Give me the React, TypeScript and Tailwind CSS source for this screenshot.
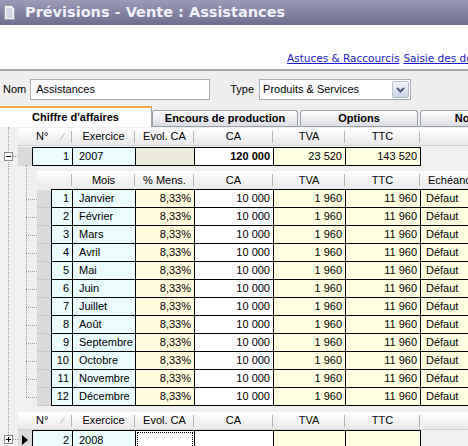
const months = [
  "Janvier",
  "Février",
  "Mars",
  "Avril",
  "Mai",
  "Juin",
  "Juillet",
  "Août",
  "Septembre",
  "Octobre",
  "Novembre",
  "Décembre",
];

function DocIcon() {
  return (
    <svg width="13" height="15" viewBox="0 0 13 15" className="shrink-0">
      <path d="M1.5 0.5h7l3 3v11h-10z" fill="#f4f4f8" stroke="#9aa0b0" />
      <path d="M3.5 4h5M3.5 6h6M3.5 8h6M3.5 10h6M3.5 12h6" stroke="#a8b4c8" />
    </svg>
  );
}

function HeadCell({
  width,
  label,
  sort = false,
}: {
  width: string;
  label?: string;
  sort?: boolean;
}) {
  return (
    <div
      className={`relative flex h-full shrink-0 items-center ${width} ${
        sort ? "justify-start pl-[4px]" : "justify-center"
      }`}
    >
      {label}
      {sort ? (
        <svg width="5" height="7" viewBox="0 0 5 7" className="ml-auto mr-[7px]">
          <path d="M0.5 6.5L4.5 0.5" stroke="#b8b8b8" />
        </svg>
      ) : null}
      <span className="absolute right-0 top-[3px] h-[12px] w-px bg-[#b4b4b4]" />
    </div>
  );
}

function MasterHeader() {
  return (
    <div className="flex h-[18px] items-stretch">
      <div className="w-[18px] shrink-0" />
      <div className="flex flex-1 border-b border-[#d4d4d4] bg-gradient-to-b from-white to-[#e9e9e9]">
        <div className="w-[14px] shrink-0" />
        <HeadCell width="w-[40px]" label="N°" sort />
        <HeadCell width="w-[63px]" label="Exercice" />
        <HeadCell width="w-[59px]" label="Evol. CA" />
        <HeadCell width="w-[79px]" label="CA" />
        <HeadCell width="w-[72px]" label="TVA" />
        <HeadCell width="w-[75px]" label="TTC" />
      </div>
    </div>
  );
}

function ExpandBox({ open }: { open: boolean }) {
  return (
    <div className="relative flex h-[9px] w-[9px] shrink-0 items-center justify-center border border-[#8a8a8a] bg-white">
      <span className="h-px w-[5px] bg-black" />
      {open ? null : <span className="absolute h-[5px] w-px bg-black" />}
    </div>
  );
}

function TreeCell({ open }: { open: boolean }) {
  return (
    <div className="flex w-[18px] shrink-0 items-center pl-[4px]">
      <ExpandBox open={open} />
      <span className="h-0 flex-1 border-t border-dotted border-[#9a9a9a]" />
    </div>
  );
}

function Cell({
  width,
  bg,
  align = "right",
  bold = false,
  children,
}: {
  width: string;
  bg: string;
  align?: "left" | "right";
  bold?: boolean;
  children?: React.ReactNode;
}) {
  return (
    <div
      className={`flex h-full shrink-0 items-center border-r border-black ${width} ${bg} ${
        align === "right" ? "justify-end pr-[3px]" : "justify-start pl-[6px]"
      } ${bold ? "font-bold" : ""}`}
    >
      {children}
    </div>
  );
}

function ChildHeader() {
  return (
    <div className="flex h-[18px] items-stretch">
      <div className="w-[37px] shrink-0" />
      <div className="flex flex-1 overflow-hidden bg-gradient-to-b from-white to-[#e9e9e9]">
        <div className="w-[14px] shrink-0" />
        <HeadCell width="w-[21px]" />
        <HeadCell width="w-[63px]" label="Mois" />
        <HeadCell width="w-[59px]" label="% Mens." />
        <HeadCell width="w-[79px]" label="CA" />
        <HeadCell width="w-[72px]" label="TVA" />
        <HeadCell width="w-[75px]" label="TTC" />
        <div className="flex h-full items-center whitespace-nowrap pl-[8px]">Echéance</div>
      </div>
    </div>
  );
}

function ChildRow({ index, month }: { index: number; month: string }) {
  return (
    <div className="flex h-[18px] items-stretch">
      <div className="w-[26px] shrink-0" />
      <div className="flex w-[11px] shrink-0 items-center">
        <span className="h-0 w-full border-t border-dotted border-[#9a9a9a]" />
      </div>
      <div className="w-[14px] shrink-0 border-b border-[#c8c8c8] bg-[#dadada]" />
      <div className="flex flex-1 border-b border-l border-black">
        <Cell width="w-[21px]" bg="bg-[#eafcfc]">
          {index}
        </Cell>
        <Cell width="w-[63px]" bg="bg-[#eafcfc]" align="left">
          {month}
        </Cell>
        <Cell width="w-[59px]" bg="bg-[#fffbdc]">
          8,33%
        </Cell>
        <Cell width="w-[79px]" bg="bg-white">
          10 000
        </Cell>
        <Cell width="w-[72px]" bg="bg-[#ffffe1]">
          1 960
        </Cell>
        <Cell width="w-[75px]" bg="bg-[#ffffe1]">
          11 960
        </Cell>
        <div className="flex flex-1 items-center bg-[#ffffe1] pl-[5px]">Défaut</div>
      </div>
    </div>
  );
}

export default function App() {
  return (
    <div className="flex h-[446px] w-[468px] flex-col overflow-hidden bg-white font-['Liberation_Sans',Arial,sans-serif] text-[11px] text-black">
      {/* title bar */}
      <div className="flex h-[25px] shrink-0 items-center gap-[9px] bg-gradient-to-b from-[#9c9ab8] to-[#6f6d90] pl-[3px]">
        <DocIcon />
        <span className="whitespace-nowrap font-['DejaVu_Sans',Verdana,sans-serif] text-[14.5px] font-bold text-[#f2f2fa]">
          Prévisions - Vente : Assistances
        </span>
      </div>

      {/* links */}
      <div className="flex h-[44px] shrink-0 items-end overflow-hidden whitespace-nowrap pb-[2px] pl-[287px] font-['DejaVu_Sans',Verdana,sans-serif] text-[10.5px] text-[#1c1ccc]">
        <a className="underline">Astuces &amp; Raccourcis</a>
        <a className="ml-[4px] underline">Saisie des données</a>
      </div>

      {/* toolbar */}
      <div className="flex h-[37px] shrink-0 items-center border-t-2 border-[#a4a4a4] bg-[#efefef] pt-[2px]">
        <span className="pl-[3px] pr-[4px]">Nom</span>
        <div className="flex h-[21px] w-[180px] items-center border border-[#a9aeb6] bg-white pl-[5px]">
          Assistances
        </div>
        <span className="ml-[20px] mr-[5px]">Type</span>
        <div className="flex h-[21px] w-[152px] items-center border border-[#a9aeb6] bg-white pl-[3px]">
          <span className="flex-1">Produits &amp; Services</span>
          <div className="mr-[1px] flex h-[17px] w-[17px] items-center justify-center rounded-[2px] border border-[#b6bfd2] bg-gradient-to-b from-[#f4f6fb] to-[#c9d2e6]">
            <svg width="9" height="6" viewBox="0 0 9 6">
              <path d="M1 1l3.5 3.5L8 1" fill="none" stroke="#4c5d80" strokeWidth="2" />
            </svg>
          </div>
        </div>
      </div>

      {/* tabs */}
      <div className="flex h-[21px] shrink-0 items-end overflow-hidden bg-[#efefef] font-bold">
        <div className="flex h-[21px] w-[152px] shrink-0 items-center justify-center border-t-2 border-r border-[#f5a93a] border-r-[#a0a7ad] bg-white pb-[1px]">
          Chiffre d'affaires
        </div>
        <div className="flex h-[17px] flex-1 items-stretch gap-[2px] border-b border-[#98a0a6]">
          <div className="flex w-[146px] shrink-0 items-center justify-center rounded-t-[3px] border-x border-t border-[#98a0a6] bg-gradient-to-b from-white to-[#dcdde4]">
            Encours de production
          </div>
          <div className="flex w-[118px] shrink-0 items-center justify-center rounded-t-[3px] border-x border-t border-[#98a0a6] bg-gradient-to-b from-white to-[#dcdde4]">
            Options
          </div>
          <div className="flex w-[100px] shrink-0 items-center justify-center rounded-t-[3px] border-x border-t border-[#98a0a6] bg-gradient-to-b from-white to-[#dcdde4]">
            Notes
          </div>
        </div>
      </div>

      {/* grid */}
      <div className="relative flex-1 bg-[#f0f0f0] pt-px">
        <span className="absolute left-[8px] top-0 h-[308px] border-l border-dotted border-[#9a9a9a]" />
        <span className="absolute left-[26px] top-[38px] h-[232px] border-l border-dotted border-[#9a9a9a]" />

        <MasterHeader />
        <div className="mt-px flex h-[19px] items-stretch">
          <TreeCell open />
          <div className="w-[14px] shrink-0 bg-[#dadada]" />
          <div className="flex border border-r-0 border-black">
            <Cell width="w-[40px]" bg="bg-[#eafcfc]">
              1
            </Cell>
            <Cell width="w-[63px]" bg="bg-[#eafcfc]" align="left">
              2007
            </Cell>
            <Cell width="w-[59px]" bg="bg-[#ecebd9]" />
            <Cell width="w-[79px]" bg="bg-white" bold>
              120 000
            </Cell>
            <Cell width="w-[72px]" bg="bg-[#ffffe1]">
              23 520
            </Cell>
            <Cell width="w-[75px]" bg="bg-[#ffffe1]">
              143 520
            </Cell>
          </div>
        </div>

        <div className="mt-[5px]">
          <ChildHeader />
          <div className="flex">
            <div className="w-[51px] shrink-0" />
            <div className="flex-1 border-t border-black" />
          </div>
          {months.map((month, i) => (
            <ChildRow key={month} index={i + 1} month={month} />
          ))}
        </div>

        <div className="mt-[6px]">
          <MasterHeader />
          <div className="flex h-[19px] items-stretch">
            <TreeCell open={false} />
            <div className="flex w-[14px] shrink-0 items-center justify-center bg-[#dadada]">
              <svg width="6" height="10" viewBox="0 0 6 10">
                <path d="M0 0l6 5-6 5z" fill="#000" />
              </svg>
            </div>
            <div className="flex border-t border-l border-black">
              <Cell width="w-[40px]" bg="bg-[#eafcfc]">
                2
              </Cell>
              <Cell width="w-[63px]" bg="bg-[#eafcfc]" align="left">
                2008
              </Cell>
              <div className="h-full w-[59px] shrink-0 border-r border-black bg-white p-px">
                <div className="h-full w-full border border-dotted border-black" />
              </div>
              <Cell width="w-[79px]" bg="bg-white" />
              <Cell width="w-[72px]" bg="bg-[#ffffe1]" />
              <Cell width="w-[75px]" bg="bg-[#ffffe1]" />
            </div>
          </div>
        </div>
      </div>
    </div>
  );
}
